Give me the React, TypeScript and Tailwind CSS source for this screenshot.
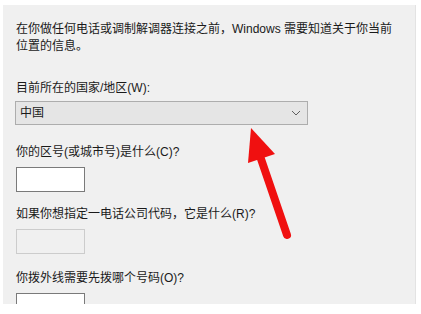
import React from 'react';

const font = { fontFamily: '"Liberation Sans", "Noto Sans CJK SC", sans-serif' };

const Label = ({ children, className = '' }: { children: React.ReactNode; className?: string }) => (
  <div className={`shrink-0 h-[17px] text-[12px] leading-[17px] text-[#1a1a1a] whitespace-nowrap ${className}`}>{children}</div>
);

const App = () => {
  return (
    <div className="relative w-[421px] h-[314px] bg-white overflow-hidden" style={font}>
      <div className="mt-[5px] ml-[3px] w-[413px] h-[299px] bg-[#f0f0f0] border-r border-[#e3e3e3] overflow-hidden pl-[13px] pt-[16px] flex flex-col">
        <Label>在你做任何电话或调制解调器连接之前，Windows 需要知道关于你当前</Label>
        <Label>位置的信息。</Label>

        <Label className="mt-[25px]">目前所在的国家/地区(W):</Label>
        <div className="shrink-0 mt-[4px] -ml-px w-[293px] h-[24px] bg-[#e5e5e5] border border-[#adadad] flex items-center justify-between pl-[4px] pr-[6px]">
          <span className="text-[12px] text-[#1a1a1a]">中国</span>
          <svg width="10" height="6" viewBox="0 0 10 6" fill="none">
            <path d="M1 1l4 4 4-4" stroke="#606060" strokeWidth="1" />
          </svg>
        </div>

        <Label className="mt-[19px]">你的区号(或城市号)是什么(C)?</Label>
        <div className="shrink-0 mt-[6px] w-[69px] h-[25px] bg-white border border-[#7a7a7a]" />

        <Label className="mt-[14px]">如果你想指定一电话公司代码，它是什么(R)?</Label>
        <div className="shrink-0 mt-[6px] w-[69px] h-[25px] bg-[#f0f0f0] border border-[#cccccc]" />

        <Label className="mt-[16px]">你拨外线需要先拨哪个号码(O)?</Label>
        <div className="shrink-0 mt-[6px] w-[69px] h-[25px] bg-white border border-[#7a7a7a]" />
      </div>

      <svg className="absolute left-0 top-0" width="421" height="314" viewBox="0 0 421 314">
        <line x1="287" y1="235" x2="260" y2="156" stroke="#f01010" strokeWidth="8" strokeLinecap="round" />
        <polygon points="251,128 248,163 275,154" fill="#f01010" />
      </svg>
    </div>
  );
};

export default App;
